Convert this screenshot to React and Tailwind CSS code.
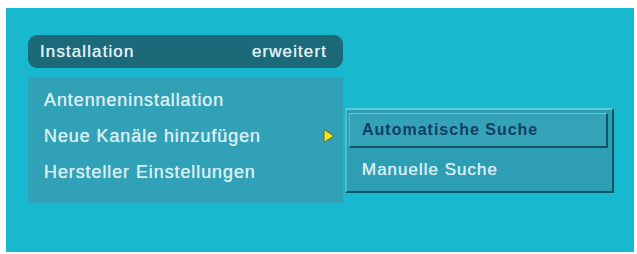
import React from "react";

const items = ["Antenneninstallation", "Neue Kanäle hinzufügen", "Hersteller Einstellungen"];

const Arrow = () => (
  <svg width="11" height="14" viewBox="0 0 11 14">
    <path d="M2.2 1.2 Q1 1 1 2.6 L1 11.4 Q1 13 2.2 12.6 L9.6 7.8 Q10.6 7 9.6 6.2 Z" fill="#f4e51a" stroke="#5f6a20" strokeWidth="1" strokeLinejoin="round" />
  </svg>
);

const App = () => {
  return (
    <div
      className="w-[637px] h-[254px] bg-white pt-[8px] pl-[6px] pr-[3px] pb-[2px]"
      style={{ fontFamily: '"Liberation Sans", Arial, sans-serif' }}
    >
      <div className="h-full bg-[#18b8cf] pt-[27px] pl-[22px] flex items-start">
        <div className="w-[315px] flex flex-col">
          <div className="h-[33px] rounded-[9px] bg-[#1c6a79] flex items-center justify-between pl-[12px] pr-[16px] text-[17px] tracking-[1.1px] text-[#dcf0f2] [text-shadow:0_0_0.7px_currentColor]">
            <span>Installation</span>
            <span>erweitert</span>
          </div>
          <div className="mt-[9px] h-[126px] bg-[#30a1b6] pt-[5px] pl-[16px] pr-[9px] text-[18px] tracking-[0.9px] text-[#d6eef2] [text-shadow:0_0_0.7px_currentColor]">
            {items.map((item, i) => (
              <div key={item} className="h-[36px] flex items-center justify-between">
                <span>{item}</span>
                {i === 1 && <Arrow />}
              </div>
            ))}
          </div>
        </div>
        <div className="ml-[2px] mt-[73px] w-[269px] h-[85px] bg-[#2d9eb3] border-2 border-t-[#5cc8da] border-l-[#4bbcd0] border-b-[#0c566a] border-r-[#0c566a] pt-[3px] pl-[2px] pr-[4px]">
          <div className="h-[35px] bg-[#34a3b7] border-t border-l border-t-[#62cadb] border-l-[#4fbfd2] border-b-2 border-r-2 border-b-[#0d5468] border-r-[#0d5468] flex items-center pl-[12px] text-[16px] font-bold tracking-[1px] text-[#123d63]">
            Automatische Suche
          </div>
          <div className="h-[43px] flex items-center pl-[13px] text-[17px] tracking-[1px] text-[#d6eef2] [text-shadow:0_0_0.7px_currentColor]">
            Manuelle Suche
          </div>
        </div>
      </div>
    </div>
  );
};

export default App;
